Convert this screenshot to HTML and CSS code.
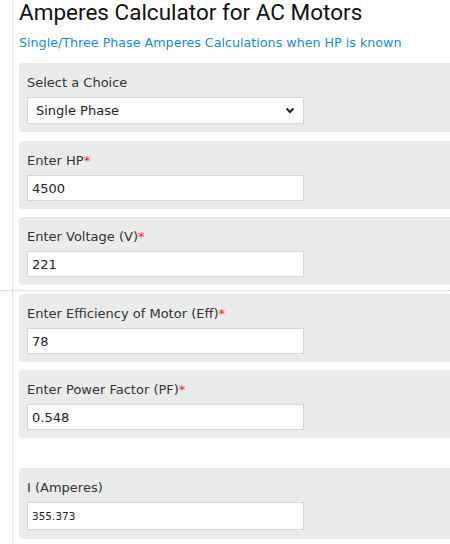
FILE: index.html
```html
<!DOCTYPE html>
<html lang="en">
<head>
    <meta charset="UTF-8">
    <meta name="viewport" content="width=device-width, initial-scale=1.0">
    <title>Amperes Calculator for AC Motors</title>
    <link rel="stylesheet" href="styles.css">
</head>
<body>
    <div class="page">
        <h1>Amperes Calculator for AC Motors</h1>
        <p class="subtitle">Single/Three Phase Amperes Calculations when HP is known</p>

        <div class="box first">
            <label for="choice">Select a Choice</label>
            <div class="select-wrap">
                <select id="choice">
                    <option value="1">Single Phase</option>
                    <option value="3">Three Phase</option>
                </select>
                <svg class="chevron" width="10" height="7" viewBox="0 0 10 7">
                    <path d="M1.5 1.5 L5 5 L8.5 1.5" fill="none" stroke="#222" stroke-width="2"/>
                </svg>
            </div>
        </div>

        <div class="box">
            <label for="hp">Enter HP<span class="req">*</span></label>
            <input type="text" id="hp" value="4500">
        </div>

        <div class="box">
            <label for="volt">Enter Voltage (V)<span class="req">*</span></label>
            <input type="text" id="volt" value="221">
        </div>

        <hr class="dotted">

        <div class="box">
            <label for="eff">Enter Efficiency of Motor (Eff)<span class="req">*</span></label>
            <input type="text" id="eff" value="78">
        </div>

        <div class="box">
            <label for="pf">Enter Power Factor (PF)<span class="req">*</span></label>
            <input type="text" id="pf" value="0.548">
        </div>

        <div class="box result">
            <label for="amps">I (Amperes)</label>
            <input type="text" id="amps" value="355.373" readonly>
        </div>
    </div>
</body>
</html>
```

FILE: styles.css
```css
html, body {
    margin: 0;
    overflow: hidden;
}
body {
    font-family: "DejaVu Sans", Verdana, sans-serif;
    background: #ffffff;
    color: #333;
}
.page {
    margin-left: 12px;
    border-left: 1px solid #e6e6e6;
    padding-left: 6px;
    margin-right: -20px;
    min-height: 544px;
}
h1 {
    font-family: Roboto, Arial, sans-serif;
    font-weight: 400;
    font-size: 22.5px;
    line-height: 24px;
    margin: 0;
    color: #111;
}
.subtitle {
    font-size: 12.7px;
    line-height: 18px;
    color: #1b8ad6;
    margin: 10px 0 11px;
}
.box {
    background: #eaebeb;
    border-radius: 4px;
    padding: 11px 8px 8px;
    margin-bottom: 8px;
}
.box.first {
    margin-bottom: 9px;
}
label {
    display: block;
    font-size: 13px;
    line-height: 18px;
    margin-bottom: 5px;
    color: #333;
}
.req {
    color: #f22;
}
input, select {
    display: block;
    box-sizing: border-box;
    width: 277px;
    height: 26px;
    border: 1px solid #d6d8d8;
    background: #fff;
    font-family: "DejaVu Sans", Verdana, sans-serif;
    font-size: 13px;
    color: #222;
    padding: 0 4px;
    margin: 0;
    border-radius: 0;
    outline: none;
}
.select-wrap {
    position: relative;
    width: 277px;
}
select {
    height: 27px;
    padding-left: 8px;
    -webkit-appearance: none;
    appearance: none;
}
.chevron {
    position: absolute;
    right: 9px;
    top: 10px;
}
hr.dotted {
    border: none;
    border-top: 1px dotted #cfcfcf;
    height: 0;
    margin: -3px 0 3px -19px;
}
.result {
    margin-top: 30px;
    padding-bottom: 9px;
}
.result input {
    height: 28px;
    font-size: 10.5px;
}
```
